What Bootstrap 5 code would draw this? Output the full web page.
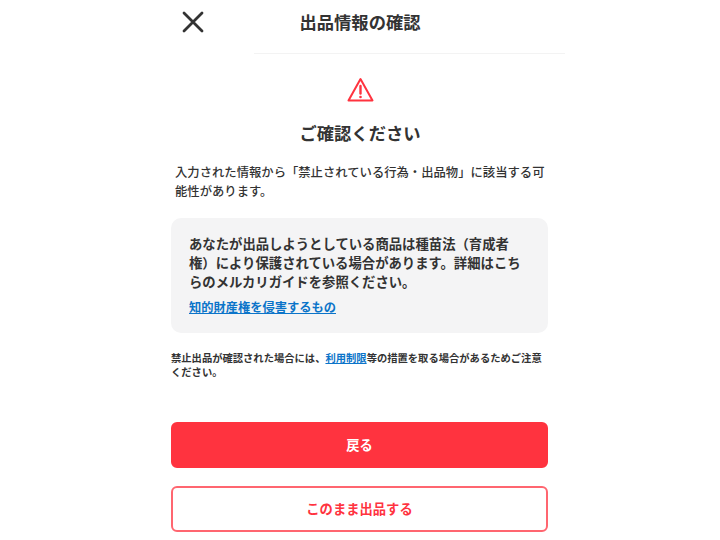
<!DOCTYPE html>
<html lang="ja">
<head>
    <meta charset="UTF-8">
    <meta name="viewport" content="width=device-width, initial-scale=1.0">
    <title>出品情報の確認</title>
    <link href="https://cdn.jsdelivr.net/npm/bootstrap@5.3.3/dist/css/bootstrap.min.css" rel="stylesheet">
    <style>
        body {
            background: #fff;
            color: #333;
            font-family: "Noto Sans CJK JP", "Liberation Sans", sans-serif;
            overflow: hidden;
        }

        .phone-screen {
            width: 412px;
            height: 540px;
        }

        .top-bar {
            height: 54px;
            position: relative;
        }

        .top-bar::after {
            content: "";
            position: absolute;
            left: 100px;
            right: 1px;
            bottom: 0;
            height: 1px;
            background: #f3f3f3;
        }

        .close-btn {
            position: absolute;
            left: 27px;
            top: 10px;
            line-height: 0;
        }

        .bar-title {
            font-size: 17.3px;
            font-weight: 700;
            line-height: 43px;
        }

        .alert-mark {
            margin-top: 23px;
            line-height: 0;
        }

        .confirm-title {
            font-size: 17.3px;
            font-weight: 700;
            line-height: 26px;
            margin-top: 17px;
            margin-bottom: 17px;
        }

        .lead-text {
            font-size: 12.33px;
            font-weight: 500;
            line-height: 19px;
            padding: 0 16px 0 21px;
            margin-bottom: 17px;
        }

        .guide-box {
            background: #f4f4f5;
            border-radius: 10px;
            margin: 0 18px 0 17px;
            padding: 16px 23px 16px 18px;
        }

        .guide-box p {
            font-size: 13.35px;
            font-weight: 700;
            line-height: 19px;
            margin-bottom: 7px;
        }

        .guide-link,
        .note-text a {
            color: #0b74c9;
        }

        .guide-link {
            font-size: 12.25px;
            font-weight: 700;
            line-height: 19px;
            display: block;
        }

        .note-text {
            font-size: 10.3px;
            font-weight: 700;
            line-height: 14px;
            margin: 18px 17px 43px;
        }

        .action-btn {
            display: block;
            width: 377px;
            height: 46px;
            margin: 0 17px;
            border-radius: 6px;
            font-size: 13.3px;
            font-weight: 700;
            line-height: 42px;
            padding: 0;
        }

        .btn-back,
        .btn-back:hover {
            background: #ff333f;
            border: 2px solid #ff333f;
            color: #fff;
        }

        .btn-list,
        .btn-list:hover {
            background: #fff;
            border: 2px solid #ff6670;
            color: #ff333f;
            margin-top: 18px;
        }
    </style>
</head>

<body>

    <div class="phone-screen mx-auto">
        <div class="top-bar text-center">
            <span class="close-btn">
                <svg width="24" height="24" viewBox="0 0 24 24" fill="none" stroke="#333" stroke-width="2.8" stroke-linecap="round">
                    <path d="M3 3L21 21M21 3L3 21" />
                </svg>
            </span>
            <div class="bar-title">出品情報の確認</div>
        </div>

        <div class="alert-mark text-center">
            <svg width="27" height="26" viewBox="0 0 27 26" fill="none" stroke="#ff333f" stroke-width="2" stroke-linejoin="round">
                <path d="M13.5 2L25.5 23.5H1.5Z" />
                <path d="M13.5 9V16.5" stroke-width="2.4" stroke-linecap="round" />
                <circle cx="13.5" cy="20" r="1.3" fill="#ff333f" stroke="none" />
            </svg>
        </div>
        <h1 class="confirm-title text-center">ご確認ください</h1>

        <p class="lead-text">入力された情報から「禁止されている行為・出品物」に該当する可能性があります。</p>

        <div class="guide-box">
            <p>あなたが出品しようとしている商品は種苗法（育成者権）により保護されている場合があります。詳細はこちらのメルカリガイドを参照ください。</p>
            <a class="guide-link" href="#">知的財産権を侵害するもの</a>
        </div>

        <p class="note-text">禁止出品が確認された場合には、<a href="#">利用制限</a>等の措置を取る場合があるためご注意ください。</p>

        <button type="button" class="btn action-btn btn-back">戻る</button>
        <button type="button" class="btn action-btn btn-list">このまま出品する</button>
    </div>

    <script src="https://cdn.jsdelivr.net/npm/bootstrap@5.3.3/dist/js/bootstrap.bundle.min.js"></script>
</body>

</html>
